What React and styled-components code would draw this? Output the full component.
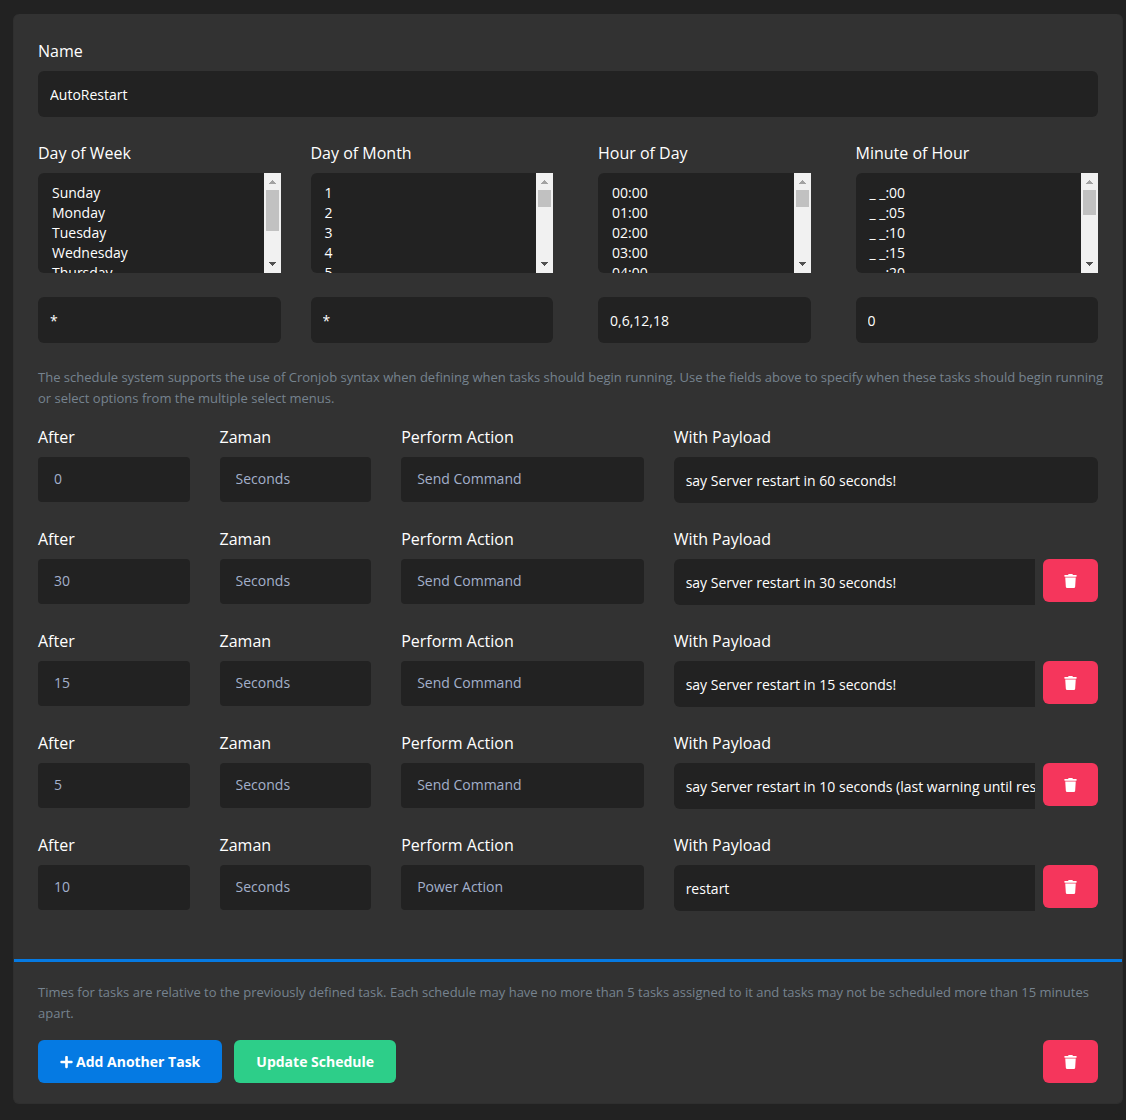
import React, { useId, useState } from "react";
import styled, { createGlobalStyle } from "styled-components";
import { FaPlus, FaTrash } from "react-icons/fa";

const fieldColor = "#222222";
const cardColor = "#323232";
const fontStack = `"Open Sans", "Noto Sans", sans-serif`;

const listHeight = 100;
const listPadding = 10;
const optionHeight = 20;
const arrowHeight = 17;

const pad = (n) => String(n).padStart(2, "0");

const weekDays = [
  "Sunday",
  "Monday",
  "Tuesday",
  "Wednesday",
  "Thursday",
  "Friday",
  "Saturday",
];
const monthDays = Array.from({ length: 31 }, (_, i) => String(i + 1));
const hours = Array.from({ length: 24 }, (_, i) => `${pad(i)}:00`);
const minutes = Array.from({ length: 12 }, (_, i) => `_ _:${pad(i * 5)}`);

const cronFields = [
  { label: "Day of Week", options: weekDays, value: "*" },
  { label: "Day of Month", options: monthDays, value: "*" },
  { label: "Hour of Day", options: hours, value: "0,6,12,18", inset: true },
  { label: "Minute of Hour", options: minutes, value: "0" },
];

const delays = ["0", "1", "5", "10", "15", "30", "60"];
const units = ["Seconds", "Minutes"];
const actions = ["Send Command", "Power Action"];

const tasks = [
  { after: "0", action: "Send Command", payload: "say Server restart in 60 seconds!" },
  { after: "30", action: "Send Command", payload: "say Server restart in 30 seconds!" },
  { after: "15", action: "Send Command", payload: "say Server restart in 15 seconds!" },
  {
    after: "5",
    action: "Send Command",
    payload: "say Server restart in 10 seconds (last warning until restart)!",
  },
  { after: "10", action: "Power Action", payload: "restart" },
];

const ListBox = ({ id, options }) => {
  const [scrolled, setScrolled] = useState(0);

  const contentHeight = options.length * optionHeight + listPadding * 2;
  const trackHeight = listHeight - arrowHeight * 2;
  const thumbHeight = Math.max(
    17,
    Math.round((trackHeight * listHeight) / contentHeight)
  );
  const thumbTop = Math.round(scrolled * (trackHeight - thumbHeight));

  const handleScroll = ({ currentTarget: list }) => {
    const range = list.scrollHeight - list.clientHeight;
    setScrolled(range > 0 ? list.scrollTop / range : 0);
  };

  return (
    <ListFrame>
      <MultiSelect id={id} multiple onScroll={handleScroll}>
        {options.map((option) => (
          <option key={option}>{option}</option>
        ))}
      </MultiSelect>
      <ScrollBar aria-hidden="true">
        <Arrow viewBox="0 0 17 17" fill="#a3a3a3" shapeRendering="crispEdges">
          <path d="M8 7h1v1h1v1h1v1h1v1H5v-1h1V9h1V8h1z" />
        </Arrow>
        <Track>
          <Thumb style={{ height: thumbHeight, marginTop: thumbTop }} />
        </Track>
        <Arrow viewBox="0 0 17 17" fill="#505050" shapeRendering="crispEdges">
          <path d="M5 6h7v1h-1v1h-1v1H9v1H8V9H7V8H6V7H5z" />
        </Arrow>
      </ScrollBar>
    </ListFrame>
  );
};

const CronField = ({ label, options, value, inset }) => {
  const id = useId();
  return (
    <CronColumn $inset={inset}>
      <Group>
        <Label htmlFor={id}>{label}</Label>
        <ListBox id={id} options={options} />
      </Group>
      <Input aria-label={`${label} value`} defaultValue={value} />
    </CronColumn>
  );
};

const SelectField = ({ label, options, value }) => {
  const id = useId();
  return (
    <div>
      <Label htmlFor={id}>{label}</Label>
      <Select id={id} defaultValue={value}>
        {options.map((option) => (
          <option key={option}>{option}</option>
        ))}
      </Select>
    </div>
  );
};

const Task = ({ after, action, payload, removable }) => {
  const id = useId();
  return (
    <TaskRow>
      <SelectField label="After" options={delays} value={after} />
      <SelectField label="Zaman" options={units} value="Seconds" />
      <SelectField label="Perform Action" options={actions} value={action} />
      <div>
        <Label htmlFor={id}>With Payload</Label>
        <PayloadGroup>
          <Input id={id} defaultValue={payload} $joined={removable} />
          {removable && (
            <DeleteButton type="button" $color="#f5365c" aria-label="Remove task">
              <FaTrash />
            </DeleteButton>
          )}
        </PayloadGroup>
      </div>
    </TaskRow>
  );
};

const App = () => {
  const nameId = useId();
  return (
    <>
      <GlobalStyle />
      <Card onSubmit={(e) => e.preventDefault()}>
        <CardBody>
          <Group>
            <Label htmlFor={nameId}>Name</Label>
            <Input id={nameId} defaultValue="AutoRestart" />
          </Group>
          <CronRow>
            {cronFields.map((field) => (
              <CronField key={field.label} {...field} />
            ))}
          </CronRow>
          <HelpText>
            The schedule system supports the use of Cronjob syntax when defining
            when tasks should begin running. Use the fields above to specify
            when these tasks should begin running or select options from the
            multiple select menus.
          </HelpText>
          <TaskList>
            {tasks.map((task, index) => (
              <Task key={task.payload} {...task} removable={index > 0} />
            ))}
          </TaskList>
        </CardBody>
        <CardFooter>
          <HelpText>
            Times for tasks are relative to the previously defined task. Each
            schedule may have no more than 5 tasks assigned to it and tasks may
            not be scheduled more than 15 minutes apart.
          </HelpText>
          <Actions>
            <Button type="button" $color="#057ae3">
              <FaPlus /> Add Another Task
            </Button>
            <Button type="submit" $color="#2dce89">
              Update Schedule
            </Button>
            <DeleteButton type="button" $color="#f5365c" aria-label="Delete schedule">
              <FaTrash />
            </DeleteButton>
          </Actions>
        </CardFooter>
      </Card>
    </>
  );
};

const GlobalStyle = createGlobalStyle`
  *, *::before, *::after {
    box-sizing: border-box;
  }

  body {
    margin: 0;
    padding: 14px 3px 16px 13px;
    background-color: #222222;
    color: white;
    font-family: ${fontStack};
  }
`;

const Card = styled.form`
  background-color: ${cardColor};
  border: solid #2f2f2f;
  border-width: 0 1px 1px;
  border-radius: 6px;
`;

const CardBody = styled.div`
  padding: 25px 24px 24px;
`;

const CardFooter = styled.div`
  padding: 20px 24px;
  border-top: 3px solid #057ae3;
`;

const Group = styled.div`
  margin-bottom: 24px;
`;

const Label = styled.label`
  display: block;
  margin-bottom: 8px;
  font-size: 16px;
  line-height: 24px;
`;

const Input = styled.input`
  display: block;
  width: 100%;
  min-width: 0;
  height: 46px;
  padding: ${({ $joined }) => ($joined ? "0 0 0 12px" : "0 12px")};
  border: 0;
  border-radius: ${({ $joined }) => ($joined ? "6px 0 0 6px" : "6px")};
  background-color: ${fieldColor};
  color: white;
  font-family: ${fontStack};
  font-size: 14px;
`;

const Select = styled.select`
  appearance: none;
  display: block;
  width: 100%;
  height: 45px;
  padding: 0 16px 2px;
  border: 0;
  border-radius: 4px;
  background-color: ${fieldColor};
  color: #a3b0cb;
  font-family: ${fontStack};
  font-size: 14px;
`;

const ListFrame = styled.div`
  display: flex;
  height: ${listHeight}px;
`;

const MultiSelect = styled.select`
  flex: 1;
  min-width: 0;
  height: 100%;
  padding: ${listPadding}px 12px;
  border: 0;
  border-radius: 6px 0 0 6px;
  background-color: ${fieldColor};
  color: white;
  font-family: ${fontStack};
  font-size: 14px;
  scrollbar-width: none;
`;

const ScrollBar = styled.div`
  display: flex;
  flex-direction: column;
  width: 17px;
  background-color: #f1f1f1;
`;

const Arrow = styled.svg`
  display: block;
  width: 17px;
  height: ${arrowHeight}px;
`;

const Track = styled.div`
  flex: 1;
  padding: 0 2px;
  overflow: hidden;
`;

const Thumb = styled.div`
  background-color: #c1c1c1;
`;

const CronRow = styled.div`
  display: grid;
  grid-template-columns: repeat(4, minmax(0, 1fr));
  gap: 30px;
  margin-bottom: 24px;
`;

const CronColumn = styled.div`
  padding: ${({ $inset }) => ($inset ? "0 15px" : "0")};
`;

const HelpText = styled.p`
  margin: 0 -8px 16px 0;
  color: #76838f;
  font-size: 13px;
  line-height: 21px;
`;

const TaskList = styled.div`
  padding-bottom: 24px;
`;

const TaskRow = styled.div`
  display: grid;
  grid-template-columns: 5fr 5fr 8fr 14fr;
  gap: 30px;

  & + & {
    margin-top: 24px;
  }
`;

const PayloadGroup = styled.div`
  display: flex;
  align-items: flex-start;
  gap: 8px;
`;

const Button = styled.button`
  display: inline-flex;
  flex-shrink: 0;
  align-items: center;
  justify-content: center;
  gap: 3px;
  height: 43px;
  padding: 0 22px;
  border: 0;
  border-radius: 6px;
  background-color: ${({ $color }) => $color};
  color: white;
  font-family: ${fontStack};
  font-size: 14px;
  font-weight: 700;
  cursor: pointer;

  svg {
    width: 13px;
    height: 14px;
  }
`;

const DeleteButton = styled(Button)`
  padding: 0 21px;
`;

const Actions = styled.div`
  display: flex;
  gap: 12px;

  ${DeleteButton} {
    margin-left: auto;
  }
`;

export default App;
